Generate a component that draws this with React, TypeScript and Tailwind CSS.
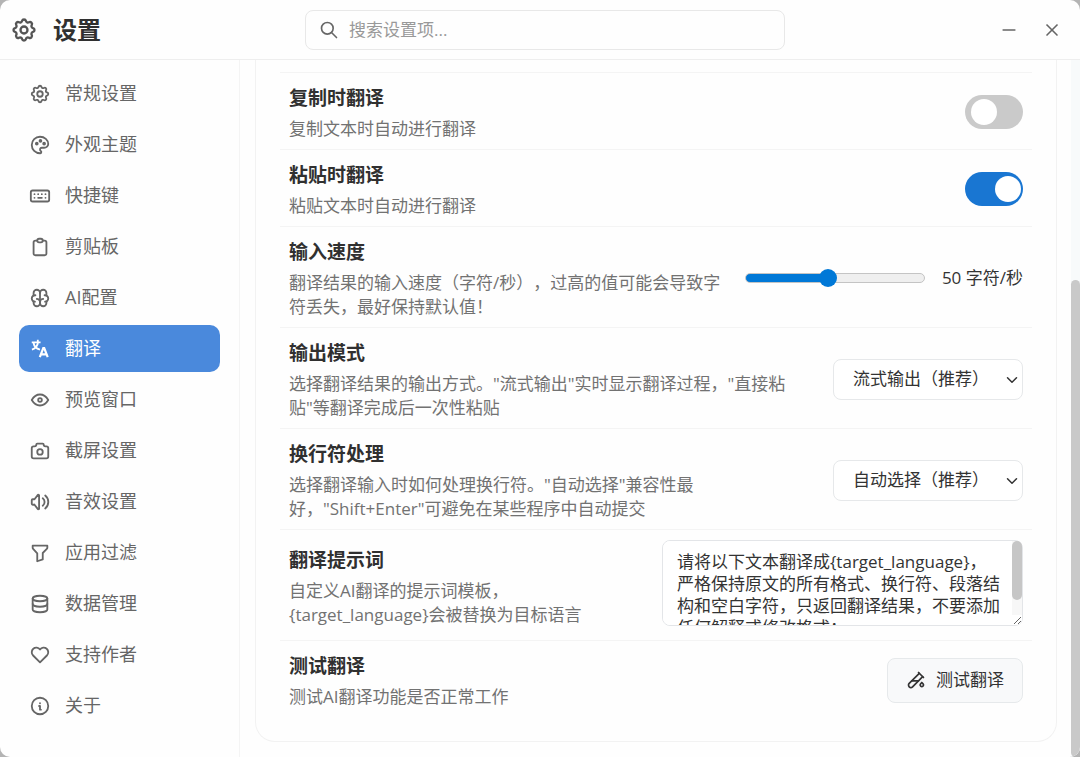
import { useState } from "react";
import type { ReactNode } from "react";
import {
  TbBrain,
  TbCamera,
  TbChevronDown,
  TbClipboard,
  TbDatabase,
  TbEye,
  TbFilter,
  TbHeart,
  TbInfoCircle,
  TbKeyboard,
  TbMinus,
  TbPalette,
  TbSearch,
  TbSettings,
  TbTestPipe,
  TbVolume,
  TbX,
} from "react-icons/tb";

function TranslateIcon({ size }: { size: number }) {
  return (
    <svg
      width={size}
      height={size}
      viewBox="0 0 24 24"
      fill="none"
      stroke="currentColor"
      strokeWidth={2}
    >
      <path d="M3 4.8h9.6M9.6 2v2.8M9.8 4.8C9.4 8.4 7 11.4 3.2 12.7M5 5.4c.4 3.2 3 6.3 7 7.3" />
      <path
        strokeWidth={2.4}
        d="M11.8 20.8 15.6 11h1l3.8 9.8M13.2 17.8h5.8"
      />
    </svg>
  );
}

const navItems = [
  { id: "general", label: "常规设置", icon: TbSettings },
  { id: "appearance", label: "外观主题", icon: TbPalette },
  { id: "shortcuts", label: "快捷键", icon: TbKeyboard },
  { id: "clipboard", label: "剪贴板", icon: TbClipboard },
  { id: "ai", label: "AI配置", icon: TbBrain },
  { id: "translation", label: "翻译", icon: TranslateIcon },
  { id: "preview", label: "预览窗口", icon: TbEye },
  { id: "screenshot", label: "截屏设置", icon: TbCamera },
  { id: "sound", label: "音效设置", icon: TbVolume },
  { id: "filter", label: "应用过滤", icon: TbFilter },
  { id: "data", label: "数据管理", icon: TbDatabase },
  { id: "support", label: "支持作者", icon: TbHeart },
  { id: "about", label: "关于", icon: TbInfoCircle },
];

const MAX_SPEED = 110;

interface SettingRowProps {
  id: string;
  title: string;
  description: string;
  children: ReactNode;
}

function SettingRow({ id, title, description, children }: SettingRowProps) {
  return (
    <div className="flex items-center gap-4 border-t border-[#f4f4f4] px-[9px] pt-[10px] pb-2">
      <div className="min-w-0 flex-1 pt-1">
        <label
          htmlFor={id}
          className="block text-[19px] leading-[22px] font-bold text-[#303030]"
        >
          {title}
        </label>
        <p className="mt-2 text-[17px] leading-6 text-[#727272]">
          {description}
        </p>
      </div>
      <div className="shrink-0">{children}</div>
    </div>
  );
}

interface ToggleProps {
  id: string;
  checked: boolean;
  onChange: (value: boolean) => void;
}

function Toggle({ id, checked, onChange }: ToggleProps) {
  return (
    <input
      id={id}
      type="checkbox"
      role="switch"
      checked={checked}
      onChange={(e) => onChange(e.target.checked)}
      className="block h-[34px] w-[58px] cursor-pointer appearance-none rounded-full bg-[#cacaca] p-1 pl-[6px] transition-colors before:block before:h-[26px] before:w-[26px] before:rounded-full before:bg-white before:transition-transform checked:bg-[#1976d2] checked:before:translate-x-6"
    />
  );
}

interface SelectProps {
  id: string;
  options: string[];
}

function Select({ id, options }: SelectProps) {
  return (
    <div className="relative">
      <select
        id={id}
        className="block h-[41px] w-[190px] cursor-pointer appearance-none rounded-lg border border-[#e6e8ea] bg-white pl-[19px] text-[17px] text-[#333333]"
      >
        {options.map((option) => (
          <option key={option}>{option}</option>
        ))}
      </select>
      <TbChevronDown
        size={18}
        className="pointer-events-none absolute top-3 right-[2px] text-[#333333]"
      />
    </div>
  );
}

export default function App() {
  const [active, setActive] = useState("translation");
  const [onCopy, setOnCopy] = useState(false);
  const [onPaste, setOnPaste] = useState(true);
  const [speed, setSpeed] = useState(50);
  const [prompt, setPrompt] = useState(
    "请将以下文本翻译成{target_language}，严格保持原文的所有格式、换行符、段落结构和空白字符，只返回翻译结果，不要添加任何解释或修改格式："
  );

  return (
    <div className="h-screen bg-[#b4b4b4] font-['Open_Sans','Noto_Sans_CJK_SC',sans-serif] [text-spacing-trim:space-all]">
      <div className="flex h-full flex-col overflow-hidden rounded-[10px] bg-[#fefefe]">
        {/* Title bar */}
        <header className="grid h-[60px] shrink-0 grid-cols-[1fr_480px_1fr] items-center border-b border-[#eeeeee] pl-[10px]">
          <div className="flex items-center gap-[15px]">
            <TbSettings size={28} className="text-[#555555]" />
            <h1 className="text-2xl font-bold text-[#303030]">设置</h1>
          </div>
          <div className="flex h-10 items-center gap-[10px] rounded-lg border border-[#e8e8e8] pl-[13px]">
            <TbSearch size={20} className="text-[#666666]" />
            <input
              type="text"
              aria-label="搜索设置项"
              placeholder="搜索设置项..."
              className="min-w-0 flex-1 bg-transparent text-[17px] text-[#333333] outline-none placeholder:text-[#999999]"
            />
          </div>
          <div className="flex justify-end pr-[7px]">
            <button
              aria-label="最小化"
              className="flex h-10 w-[43px] items-center justify-center text-[#666666]"
            >
              <TbMinus size={20} />
            </button>
            <button
              aria-label="关闭"
              className="flex h-10 w-[43px] items-center justify-center text-[#666666]"
            >
              <TbX size={20} />
            </button>
          </div>
        </header>

        <div className="flex min-h-0 flex-1">
          {/* Sidebar */}
          <nav className="flex w-60 shrink-0 flex-col gap-1 border-r border-[#f4f4f4] px-[19px] pt-[10px]">
            {navItems.map(({ id, label, icon: Icon }) => (
              <button
                key={id}
                onClick={() => setActive(id)}
                className={`flex h-[47px] shrink-0 items-center gap-[14px] rounded-[10px] pl-[10px] text-[18px] ${
                  active === id
                    ? "bg-[#4a89dc] text-white"
                    : "text-[#666666] hover:bg-gray-50"
                }`}
              >
                <Icon size={22} />
                {label}
              </button>
            ))}
          </nav>

          {/* Settings */}
          <main className="min-w-0 flex-1 overflow-hidden pr-[14px] pl-[15px]">
            <section className="rounded-b-[20px] border-x border-b border-[#f2f2f2] px-6 pt-3 pb-6">
              <SettingRow
                id="on-copy"
                title="复制时翻译"
                description="复制文本时自动进行翻译"
              >
                <Toggle id="on-copy" checked={onCopy} onChange={setOnCopy} />
              </SettingRow>

              <SettingRow
                id="on-paste"
                title="粘贴时翻译"
                description="粘贴文本时自动进行翻译"
              >
                <Toggle id="on-paste" checked={onPaste} onChange={setOnPaste} />
              </SettingRow>

              <SettingRow
                id="speed"
                title="输入速度"
                description="翻译结果的输入速度（字符/秒），过高的值可能会导致字符丢失，最好保持默认值！"
              >
                <div className="flex items-center gap-[17px]">
                  <input
                    id="speed"
                    type="range"
                    min={0}
                    max={MAX_SPEED}
                    value={speed}
                    onChange={(e) => setSpeed(Number(e.target.value))}
                    style={{
                      backgroundImage: `linear-gradient(to right, #0078d7 ${(speed / MAX_SPEED) * 100}%, transparent 0)`,
                    }}
                    className="h-[10px] w-[180px] cursor-pointer appearance-none rounded-full border border-[#c4c4c4] bg-[#efefef] bg-origin-border [&::-webkit-slider-thumb]:h-[18px] [&::-webkit-slider-thumb]:w-[18px] [&::-webkit-slider-thumb]:appearance-none [&::-webkit-slider-thumb]:rounded-full [&::-webkit-slider-thumb]:bg-[#0078d7]"
                  />
                  <span className="text-[17px] text-[#333333]">
                    {speed} 字符/秒
                  </span>
                </div>
              </SettingRow>

              <SettingRow
                id="output-mode"
                title="输出模式"
                description={
                  '选择翻译结果的输出方式。"流式输出"实时显示翻译过程，"直接粘贴"等翻译完成后一次性粘贴'
                }
              >
                <Select
                  id="output-mode"
                  options={["流式输出（推荐）", "直接粘贴"]}
                />
              </SettingRow>

              <SettingRow
                id="newline-mode"
                title="换行符处理"
                description={
                  '选择翻译输入时如何处理换行符。"自动选择"兼容性最好，"Shift+Enter"可避免在某些程序中自动提交'
                }
              >
                <Select
                  id="newline-mode"
                  options={["自动选择（推荐）", "Shift+Enter", "Enter"]}
                />
              </SettingRow>

              <SettingRow
                id="prompt"
                title="翻译提示词"
                description="自定义AI翻译的提示词模板，{target_language}会被替换为目标语言"
              >
                <div className="pb-[6px]">
                  <div className="relative">
                    <textarea
                      id="prompt"
                      value={prompt}
                      onChange={(e) => setPrompt(e.target.value)}
                      className="block h-[86px] w-[361px] resize rounded-lg border border-[#e3e5e8] bg-white py-[10px] pr-[21px] pl-[14px] text-[17px] leading-[22px] text-[#333333] [&::-webkit-scrollbar]:hidden"
                    />
                    <div className="pointer-events-none absolute top-px right-px h-[74px] w-[10px] rounded-tr-lg bg-[#f7f7f7]">
                      <div className="h-[59px] rounded-full bg-[#c6c6c6]" />
                    </div>
                  </div>
                </div>
              </SettingRow>

              <SettingRow
                id="test"
                title="测试翻译"
                description="测试AI翻译功能是否正常工作"
              >
                <button
                  id="test"
                  className="flex h-[45px] items-center gap-[10px] rounded-lg border border-[#e6e9eb] bg-[#f8f9fa] px-[18px] text-[17px] text-[#333333]"
                >
                  <TbTestPipe size={20} />
                  测试翻译
                </button>
              </SettingRow>
            </section>
          </main>

          {/* Scroll bar */}
          <div className="flex w-[9px] shrink-0 flex-col justify-end bg-[#f8fafb]">
            <div className="h-[68.5%] rounded-full bg-[#c9c9c9]" />
          </div>
        </div>
      </div>
    </div>
  );
}
